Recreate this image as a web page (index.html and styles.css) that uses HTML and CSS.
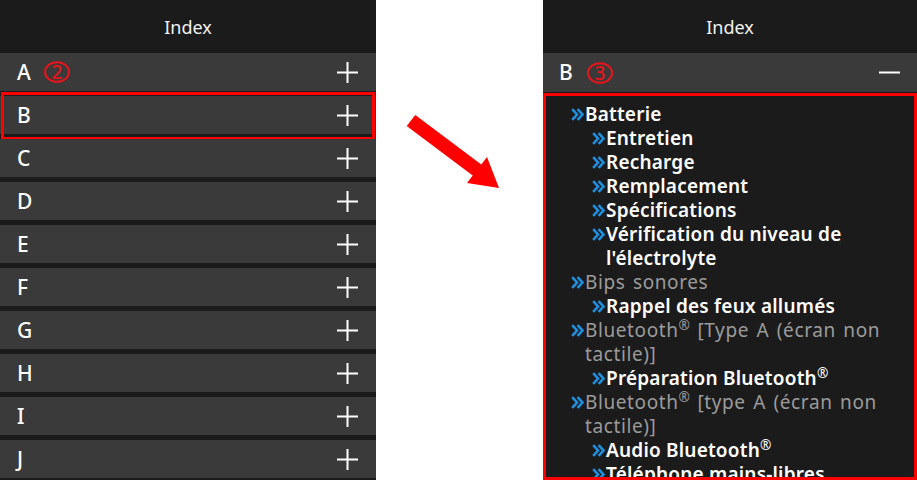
FILE: index.html
```html
<!DOCTYPE html>
<html lang="fr">
<head>
<meta charset="utf-8">
<title>Index</title>
<link rel="stylesheet" href="styles.css">
</head>
<body>
<div class="page">
  <section class="panel panel-left">
    <header class="panel-head">Index</header>
    <ul class="letters">
      <li class="letter"><span class="letter-name">A</span><svg class="badge" viewBox="0 0 28 22" width="28" height="22"><ellipse cx="14" cy="11" rx="12" ry="9.8" /><text x="14" y="17.5">2</text></svg><svg class="toggle" viewBox="0 0 21 21" width="21" height="21"><path d="M10.5 0v21M0 10.5h21"/></svg></li>
      <li class="letter is-marked"><span class="letter-name">B</span><svg class="toggle" viewBox="0 0 21 21" width="21" height="21"><path d="M10.5 0v21M0 10.5h21"/></svg></li>
      <li class="letter"><span class="letter-name">C</span><svg class="toggle" viewBox="0 0 21 21" width="21" height="21"><path d="M10.5 0v21M0 10.5h21"/></svg></li>
      <li class="letter"><span class="letter-name">D</span><svg class="toggle" viewBox="0 0 21 21" width="21" height="21"><path d="M10.5 0v21M0 10.5h21"/></svg></li>
      <li class="letter"><span class="letter-name">E</span><svg class="toggle" viewBox="0 0 21 21" width="21" height="21"><path d="M10.5 0v21M0 10.5h21"/></svg></li>
      <li class="letter"><span class="letter-name">F</span><svg class="toggle" viewBox="0 0 21 21" width="21" height="21"><path d="M10.5 0v21M0 10.5h21"/></svg></li>
      <li class="letter"><span class="letter-name">G</span><svg class="toggle" viewBox="0 0 21 21" width="21" height="21"><path d="M10.5 0v21M0 10.5h21"/></svg></li>
      <li class="letter"><span class="letter-name">H</span><svg class="toggle" viewBox="0 0 21 21" width="21" height="21"><path d="M10.5 0v21M0 10.5h21"/></svg></li>
      <li class="letter"><span class="letter-name">I</span><svg class="toggle" viewBox="0 0 21 21" width="21" height="21"><path d="M10.5 0v21M0 10.5h21"/></svg></li>
      <li class="letter"><span class="letter-name">J</span><svg class="toggle" viewBox="0 0 21 21" width="21" height="21"><path d="M10.5 0v21M0 10.5h21"/></svg></li>
    </ul>
  </section>

  <div class="gap">
    <svg class="arrow" viewBox="0 0 96 78" width="96" height="78"><polygon points="10.3,2.9 76.3,52.4 82,45 94,76 62,71 67.7,63.6 1.7,14.1"/></svg>
  </div>

  <section class="panel panel-right">
    <header class="panel-head">Index</header>
    <div class="letter letter-open"><span class="letter-name">B</span><svg class="badge" viewBox="0 0 28 22" width="28" height="22"><ellipse cx="14" cy="11" rx="12" ry="9.8" /><text x="14" y="17.5">3</text></svg><svg class="toggle" viewBox="0 0 21 21" width="21" height="21"><path d="M0 10.5h21"/></svg></div>
    <div class="topics-box">
      <ul class="topics">
        <li><div class="topic is-link"><svg class="mark" viewBox="0 0 13 13" width="13" height="13"><path d="M1.2 1.2L6 6.5L1.2 11.8M6.6 1.2L11.4 6.5L6.6 11.8"/></svg><span class="label">Batterie</span></div>
          <ul class="topics sub">
            <li><div class="topic is-link"><svg class="mark" viewBox="0 0 13 13" width="13" height="13"><path d="M1.2 1.2L6 6.5L1.2 11.8M6.6 1.2L11.4 6.5L6.6 11.8"/></svg><span class="label">Entretien</span></div></li>
            <li><div class="topic is-link"><svg class="mark" viewBox="0 0 13 13" width="13" height="13"><path d="M1.2 1.2L6 6.5L1.2 11.8M6.6 1.2L11.4 6.5L6.6 11.8"/></svg><span class="label">Recharge</span></div></li>
            <li><div class="topic is-link"><svg class="mark" viewBox="0 0 13 13" width="13" height="13"><path d="M1.2 1.2L6 6.5L1.2 11.8M6.6 1.2L11.4 6.5L6.6 11.8"/></svg><span class="label">Remplacement</span></div></li>
            <li><div class="topic is-link"><svg class="mark" viewBox="0 0 13 13" width="13" height="13"><path d="M1.2 1.2L6 6.5L1.2 11.8M6.6 1.2L11.4 6.5L6.6 11.8"/></svg><span class="label">Spécifications</span></div></li>
            <li><div class="topic is-link"><svg class="mark" viewBox="0 0 13 13" width="13" height="13"><path d="M1.2 1.2L6 6.5L1.2 11.8M6.6 1.2L11.4 6.5L6.6 11.8"/></svg><span class="label">Vérification du niveau de l'électrolyte</span></div></li>
          </ul>
        </li>
        <li><div class="topic"><svg class="mark" viewBox="0 0 13 13" width="13" height="13"><path d="M1.2 1.2L6 6.5L1.2 11.8M6.6 1.2L11.4 6.5L6.6 11.8"/></svg><span class="label">Bips sonores</span></div>
          <ul class="topics sub">
            <li><div class="topic is-link"><svg class="mark" viewBox="0 0 13 13" width="13" height="13"><path d="M1.2 1.2L6 6.5L1.2 11.8M6.6 1.2L11.4 6.5L6.6 11.8"/></svg><span class="label">Rappel des feux allumés</span></div></li>
          </ul>
        </li>
        <li><div class="topic"><svg class="mark" viewBox="0 0 13 13" width="13" height="13"><path d="M1.2 1.2L6 6.5L1.2 11.8M6.6 1.2L11.4 6.5L6.6 11.8"/></svg><span class="label">Bluetooth<sup>®</sup> [Type A (écran non tactile)]</span></div>
          <ul class="topics sub">
            <li><div class="topic is-link"><svg class="mark" viewBox="0 0 13 13" width="13" height="13"><path d="M1.2 1.2L6 6.5L1.2 11.8M6.6 1.2L11.4 6.5L6.6 11.8"/></svg><span class="label">Préparation Bluetooth<sup>®</sup></span></div></li>
          </ul>
        </li>
        <li><div class="topic"><svg class="mark" viewBox="0 0 13 13" width="13" height="13"><path d="M1.2 1.2L6 6.5L1.2 11.8M6.6 1.2L11.4 6.5L6.6 11.8"/></svg><span class="label">Bluetooth<sup>®</sup> [type A (écran non tactile)]</span></div>
          <ul class="topics sub">
            <li><div class="topic is-link"><svg class="mark" viewBox="0 0 13 13" width="13" height="13"><path d="M1.2 1.2L6 6.5L1.2 11.8M6.6 1.2L11.4 6.5L6.6 11.8"/></svg><span class="label">Audio Bluetooth<sup>®</sup></span></div></li>
            <li><div class="topic is-link"><svg class="mark" viewBox="0 0 13 13" width="13" height="13"><path d="M1.2 1.2L6 6.5L1.2 11.8M6.6 1.2L11.4 6.5L6.6 11.8"/></svg><span class="label">Téléphone mains-libres</span></div></li>
          </ul>
        </li>
      </ul>
    </div>
  </section>
</div>
</body>
</html>
```

FILE: styles.css
```css
* { box-sizing: border-box; }

html, body {
  margin: 0;
  padding: 0;
  background: #ffffff;
}

body {
  font-family: "Noto Sans", sans-serif;
  color: #ffffff;
  width: 917px;
  height: 480px;
  overflow: hidden;
}

.page {
  display: flex;
  height: 480px;
}

.panel {
  background: #1b1b1b;
  height: 480px;
  display: flex;
  flex-direction: column;
  overflow: hidden;
}

.panel-left { width: 376px; }
.panel-right { width: 374px; }

.gap {
  width: 167px;
  padding: 112px 0 0 29px;
}

.arrow { display: block; }
.arrow polygon { fill: #ff0000; }

.panel-head {
  height: 53px;
  flex: none;
  display: flex;
  align-items: center;
  justify-content: center;
  font-size: 18px;
  color: #f2f2f2;
}

.letters {
  list-style: none;
  margin: 0;
  padding: 0;
  display: flex;
  flex-direction: column;
  gap: 5px;
}

.letter {
  position: relative;
  height: 38px;
  background: #3a3a3a;
  display: flex;
  align-items: center;
  padding: 0 18px 0 17px;
}

.letter-name {
  font-size: 21px;
  font-weight: 500;
  line-height: 1;
  width: 14px;
}

.badge {
  margin-left: 12px;
  flex: none;
}
.badge ellipse {
  fill: none;
  stroke: #e8141b;
  stroke-width: 2;
}
.badge text {
  fill: #e8141b;
  font-family: "Noto Sans", sans-serif;
  font-size: 19px;
  font-weight: 500;
  text-anchor: middle;
}

.toggle {
  margin-left: auto;
  flex: none;
}
.toggle path {
  stroke: #ffffff;
  stroke-width: 2;
  fill: none;
}

.is-marked::after {
  content: "";
  position: absolute;
  left: 1px;
  right: 1px;
  top: -4px;
  bottom: -6px;
  border: 3px solid #ff0000;
  pointer-events: none;
}

.letter-open {
  flex: none;
  padding: 0 17px 0 16px;
  height: 39px;
  margin-bottom: 1px;
}
.letter-open .letter-name { width: 15px; }
.letter-open .badge { margin-left: 12px; }

.topics-box {
  flex: 1;
  border: 3px solid #ff0000;
  padding: 6px 10px 0 25px;
  overflow: hidden;
}

.topics {
  list-style: none;
  margin: 0;
  padding: 0;
}

.topics.sub { padding-left: 21px; }

.topic {
  display: flex;
  align-items: flex-start;
  font-size: 19px;
  line-height: 24px;
  letter-spacing: 0.6px;
  word-spacing: 2px;
  color: #9b9b9b;
}

.topic.is-link {
  color: #ffffff;
  font-weight: 600;
  letter-spacing: 0.2px;
  word-spacing: 0;
}

.mark {
  flex: none;
  margin: 6px 1px 0 0;
}
.mark path {
  fill: none;
  stroke: #1f8fe0;
  stroke-width: 2.6;
}

.label { flex: 1; }

sup {
  font-size: 0.72em;
  line-height: 0;
  vertical-align: 0.5em;
  font-weight: 400;
  letter-spacing: 0;
}
```
